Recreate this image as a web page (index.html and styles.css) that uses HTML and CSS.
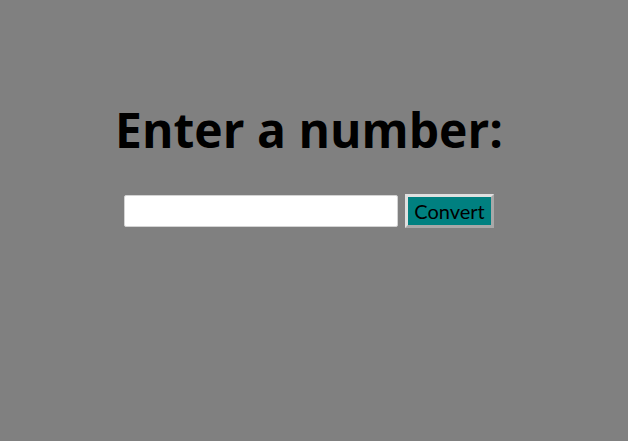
FILE: index.html
```html
<!DOCTYPE html>
<html>
<head>
<meta charset="utf-8">
<link rel="stylesheet" href="styles.css">
</head>
<body>
<main class="page">
  <h1 class="title">Enter a number:</h1>
  <form class="row">
    <input class="field" type="text">
    <button class="btn" type="button">Convert</button>
  </form>
</main>
</body>
</html>
```
FILE: styles.css
```css
html, body {
  margin: 0;
  padding: 0;
  background: #808080;
  height: 100%;
}
.page {
  display: flex;
  flex-direction: column;
  align-items: center;
  padding-top: 96px;
  padding-right: 10px;
}
.title {
  margin: 0;
  font-family: "Open Sans", sans-serif;
  font-weight: 700;
  font-size: 48px;
  line-height: 68px;
  color: #000;
}
.row {
  display: flex;
  align-items: center;
  gap: 7px;
  margin-top: 30px;
}
.field {
  box-sizing: border-box;
  width: 274px;
  height: 32px;
  border: 1px solid #d4d4d4;
  border-radius: 2px;
  background: #fff;
  margin: 0;
}
.btn {
  box-sizing: border-box;
  width: 89px;
  height: 34px;
  margin: 0;
  padding: 0;
  background: #008080;
  border: 3px solid #c8c8c8;
  border-top-color: #e0e0e0;
  border-left-color: #e0e0e0;
  border-right-color: #a8a8a8;
  border-bottom-color: #a8a8a8;
  font-family: "Lato", sans-serif;
  font-size: 20px;
  color: #000;
}
```
